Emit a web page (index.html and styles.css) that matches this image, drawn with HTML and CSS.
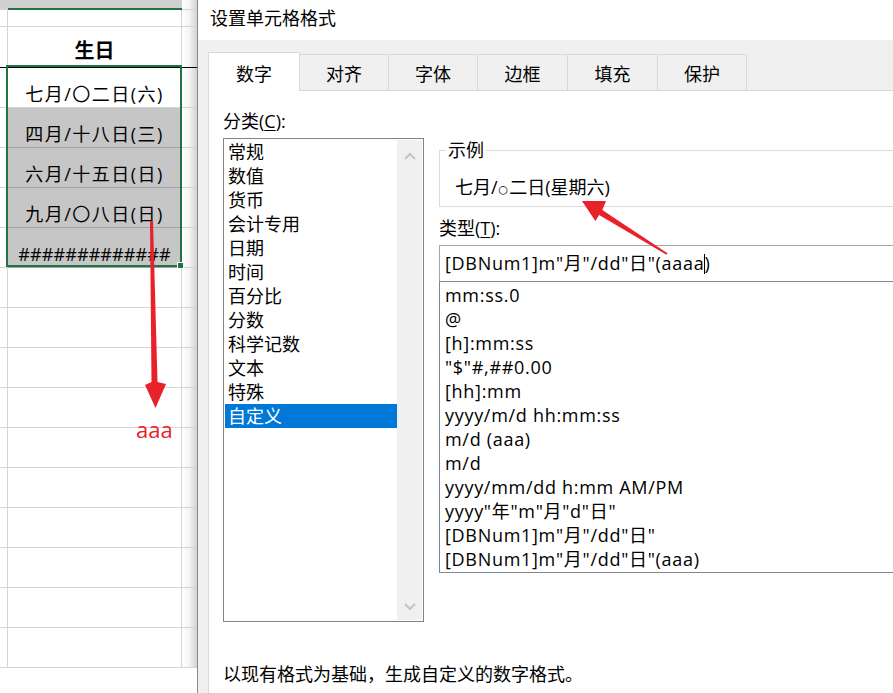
FILE: index.html
```html
<!DOCTYPE html>
<html lang="zh-CN">
<head>
<meta charset="utf-8">
<title>设置单元格格式</title>
<link rel="stylesheet" href="styles.css">
</head>
<body>
<div class="screen">
  <div class="sheet">
    <div class="srow r-top"><div class="c c0"></div><div class="c c1"></div><div class="c c2"></div></div>
    <div class="srow r-thin"><div class="c c0"></div><div class="c c1"></div><div class="c c2"></div></div>
    <div class="srow r-head"><div class="c c0"></div><div class="c c1">生日</div><div class="c c2"></div></div>
    <div class="srow"><div class="c c0"></div><div class="c c1">七月/〇二日(六)</div><div class="c c2"></div></div>
    <div class="srow sel"><div class="c c0"></div><div class="c c1">四月/十八日(三)</div><div class="c c2"></div></div>
    <div class="srow sel"><div class="c c0"></div><div class="c c1">六月/十五日(日)</div><div class="c c2"></div></div>
    <div class="srow sel"><div class="c c0"></div><div class="c c1">九月/〇八日(日)</div><div class="c c2"></div></div>
    <div class="srow sel"><div class="c c0"></div><div class="c c1 hashes">#############</div><div class="c c2"></div></div>
    <div class="srow"><div class="c c0"></div><div class="c c1"></div><div class="c c2"></div></div>
    <div class="srow"><div class="c c0"></div><div class="c c1"></div><div class="c c2"></div></div>
    <div class="srow"><div class="c c0"></div><div class="c c1"></div><div class="c c2"></div></div>
    <div class="srow"><div class="c c0"></div><div class="c c1"></div><div class="c c2"></div></div>
    <div class="srow"><div class="c c0"></div><div class="c c1"></div><div class="c c2"></div></div>
    <div class="srow"><div class="c c0"></div><div class="c c1"></div><div class="c c2"></div></div>
    <div class="srow"><div class="c c0"></div><div class="c c1"></div><div class="c c2"></div></div>
    <div class="srow"><div class="c c0"></div><div class="c c1"></div><div class="c c2"></div></div>
    <div class="srow"><div class="c c0"></div><div class="c c1"></div><div class="c c2"></div></div>
    <div class="srow"><div class="c c0"></div><div class="c c1"></div><div class="c c2"></div></div>
    <div class="selection"></div>
    <div class="fill-handle"></div>
  </div>

  <div class="dialog">
    <div class="titlebar">设置单元格格式</div>
    <div class="dbody">
      <div class="tabs">
        <div class="tab active">数字</div>
        <div class="tab">对齐</div>
        <div class="tab">字体</div>
        <div class="tab w90">边框</div>
        <div class="tab w90">填充</div>
        <div class="tab">保护</div>
      </div>
      <div class="panel">
        <div class="cols">
          <div class="left">
            <div class="label">分类(<u>C</u>):</div>
            <div class="catlist">
              <ul class="catitems">
                <li>常规</li>
                <li>数值</li>
                <li>货币</li>
                <li>会计专用</li>
                <li>日期</li>
                <li>时间</li>
                <li>百分比</li>
                <li>分数</li>
                <li>科学记数</li>
                <li>文本</li>
                <li>特殊</li>
                <li class="selected">自定义</li>
              </ul>
              <div class="vscroll">
                <svg class="chev" width="12" height="8" viewBox="0 0 12 8"><polyline points="1,7 6,2 11,7" fill="none" stroke="#c4c4c4" stroke-width="2"/></svg>
                <svg class="chev" width="12" height="8" viewBox="0 0 12 8"><polyline points="1,1 6,6 11,1" fill="none" stroke="#c4c4c4" stroke-width="2"/></svg>
              </div>
            </div>
          </div>
          <div class="right">
            <fieldset class="sample">
              <legend>示例</legend>
              <div class="sample-text">七月/<span class="mini-circ">○</span>二日(星期六)</div>
            </fieldset>
            <div class="label label-type">类型(<u>T</u>):</div>
            <div class="typeinput">[DBNum1]m"月"/dd"日"(aaaa<span class="caret"></span>)</div>
            <ul class="fmtlist">
              <li>mm:ss.0</li>
              <li>@</li>
              <li>[h]:mm:ss</li>
              <li>"$"#,##0.00</li>
              <li>[hh]:mm</li>
              <li>yyyy/m/d hh:mm:ss</li>
              <li>m/d (aaa)</li>
              <li>m/d</li>
              <li>yyyy/mm/dd h:mm AM/PM</li>
              <li>yyyy"年"m"月"d"日"</li>
              <li>[DBNum1]m"月"/dd"日"</li>
              <li>[DBNum1]m"月"/dd"日"(aaa)</li>
            </ul>
          </div>
        </div>
        <div class="hint">以现有格式为基础，生成自定义的数字格式。</div>
      </div>
    </div>
  </div>

  <svg class="annot" width="893" height="693" viewBox="0 0 893 693">
    <polygon points="150,221 153,221 157.5,382 166,384 155.5,408 145,385 151.5,382" fill="#e8212b"/>
    <polygon points="582,201 606,201 602.3,210.1 667.5,253.2 666.5,254.8 599.1,215.1 595.4,221.1" fill="#e8212b"/>
  </svg>
  <div class="aaa">aaa</div>
</div>
</body>
</html>
```

FILE: styles.css
```css
* { box-sizing: border-box; }

html, body {
  margin: 0;
  padding: 0;
}

body {
  width: 893px;
  height: 693px;
  overflow: hidden;
  background: #fff;
  color: #000;
  font-family: "Open Sans", "Noto Sans CJK SC", sans-serif;
  font-size: 18px;
}

.screen {
  position: relative;
  display: flex;
  width: 893px;
  height: 693px;
  overflow: hidden;
}

/* ---------- spreadsheet ---------- */
.sheet {
  position: relative;
  flex: none;
  width: 197px;
  display: flex;
  flex-direction: column;
  overflow: hidden;
}

.srow {
  display: flex;
  flex: none;
  height: 40px;
}

.c {
  border-bottom: 1px solid #d4d4d4;
}

.c0 {
  width: 8px;
  border-right: 1px solid #d4d4d4;
}

.c1 {
  width: 174px;
  border-right: 1px solid #d4d4d4;
  display: flex;
  align-items: flex-end;
  justify-content: center;
  line-height: 24px;
  padding-bottom: 1px;
  white-space: nowrap;
  letter-spacing: 1.5px;
}

.c2 {
  flex: 1;
  background: linear-gradient(to right, #ffffff 0%, #f6f6f6 45%, #d2d2d2 100%);
}

.r-top { height: 10px; }
.r-top .c0, .r-top .c1 { background: #d0d0d0; border-right: none; }
.r-top .c1 { border-bottom: 2px solid #217346; }

.r-thin { height: 17px; }

.r-head { height: 41px; }
.r-head .c { border-bottom-color: #000; }
.r-head .c1 {
  font-weight: bold;
  font-size: 20px;
  padding-bottom: 4px;
  letter-spacing: 0;
}

.sel .c1 {
  background: #c6c6c6;
  border-bottom-color: #a3a3a3;
}

.c1.hashes {
  letter-spacing: 0.1px;
}

.selection {
  position: absolute;
  left: 6px;
  top: 65px;
  width: 176px;
  height: 202px;
  border: 2px solid #217346;
}

.fill-handle {
  position: absolute;
  left: 177px;
  top: 262px;
  width: 7px;
  height: 7px;
  background: #217346;
  border: 1px solid #fff;
}

/* ---------- dialog ---------- */
.dialog {
  flex: none;
  width: 740px;
  border-left: 1px solid #8a8a8a;
  display: flex;
  flex-direction: column;
  background: #f0f0f0;
}

.titlebar {
  height: 40px;
  background: #fff;
  padding: 6px 0 0 12px;
  line-height: 24px;
}

.dbody {
  flex: 1;
  display: flex;
  flex-direction: column;
  padding: 12px 0 0 10px;
}

.tabs {
  display: flex;
  align-items: flex-end;
  height: 38px;
  flex: none;
}

.tab {
  width: 89px;
  height: 36px;
  border: 1px solid #d9d9d9;
  border-left: none;
  border-bottom: none;
  background: #f0f0f0;
  display: flex;
  align-items: center;
  justify-content: center;
  padding-top: 2px;
  line-height: 24px;
}

.tab.w90 { width: 90px; }

.tab.active {
  position: relative;
  z-index: 1;
  width: 92px;
  height: 39px;
  margin-bottom: -1px;
  border-left: 1px solid #d9d9d9;
  background: #fff;
  padding-top: 3px;
}

.panel {
  flex: 1;
  background: #fff;
  border-top: 1px solid #d9d9d9;
  border-left: 1px solid #d9d9d9;
  padding-left: 14px;
}

.cols {
  display: flex;
  margin-top: 18px;
}

.left {
  flex: none;
  width: 201px;
}

.label {
  height: 24px;
  line-height: 24px;
}

.label u {
  text-underline-offset: 2px;
}

.catlist {
  margin-top: 5px;
  height: 484px;
  border: 1px solid #828282;
  padding: 1px;
  display: flex;
}

.catitems {
  list-style: none;
  margin: 0;
  padding: 0;
  width: 172px;
}

.catitems li {
  height: 24px;
  line-height: 24px;
  padding-left: 3px;
}

.catitems li.selected {
  background: #0078d7;
  color: #fff;
}

.vscroll {
  flex: 1;
  background: #f0f0f0;
  display: flex;
  flex-direction: column;
  justify-content: space-between;
  align-items: center;
  padding: 12px 0 9px;
}

.chev { display: block; }

.right {
  flex: 1;
  min-width: 0;
  margin-left: 15px;
  padding-top: 29px;
}

.sample {
  margin: 0;
  padding: 0 0 4px 15px;
  border: 1px solid #dcdcdc;
  border-right: none;
  min-width: 0;
}

.sample legend {
  margin-left: -9px;
  padding: 0 2px;
  line-height: 24px;
}

.sample-text {
  margin-top: 13px;
  line-height: 24px;
}

.mini-circ {
  font-family: "DejaVu Sans", sans-serif;
  font-size: 11px;
  vertical-align: 1px;
  margin: 0 1px;
}

.label-type {
  margin-top: 9px;
}

.typeinput {
  margin-top: 5px;
  height: 36px;
  border-top: 1px solid #a6a6a6;
  border-left: 1px solid #a6a6a6;
  padding-left: 5px;
  line-height: 34px;
  white-space: nowrap;
  letter-spacing: 0.7px;
}

.caret {
  display: inline-block;
  width: 1px;
  height: 20px;
  background: #000;
  vertical-align: -4px;
  margin-right: -1px;
}

.fmtlist {
  list-style: none;
  margin: 0;
  height: 292px;
  border-top: 1px solid #828790;
  border-left: 1px solid #828790;
  border-bottom: 1px solid #828790;
  padding: 1px 0 0 5px;
}

.fmtlist li {
  height: 24px;
  line-height: 24px;
  white-space: nowrap;
  letter-spacing: 0.7px;
}

.hint {
  margin-top: 40px;
  line-height: 24px;
}

/* ---------- annotations ---------- */
.annot {
  position: absolute;
  left: 0;
  top: 0;
  pointer-events: none;
}

.aaa {
  position: absolute;
  left: 136px;
  top: 416px;
  color: #e8212b;
  font-size: 22px;
  line-height: 26px;
}
```
